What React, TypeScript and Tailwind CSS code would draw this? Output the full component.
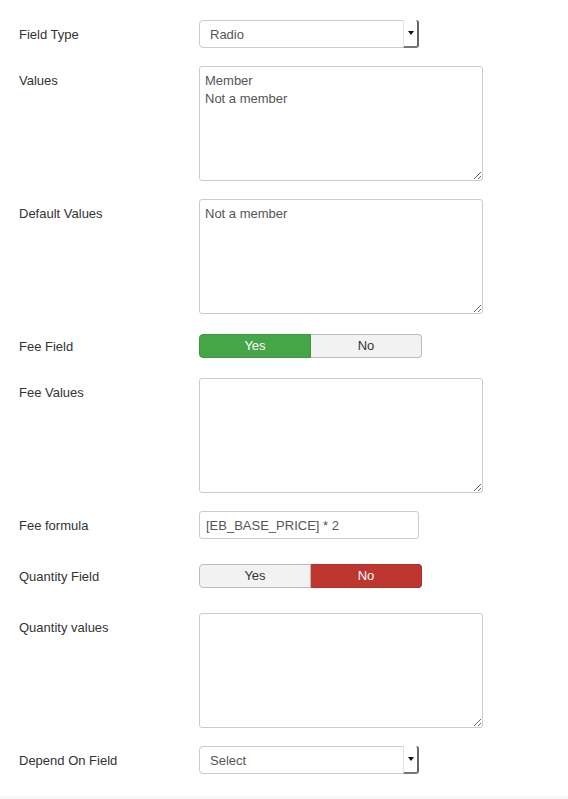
import React from "react";

const font = { fontFamily: '"Liberation Sans", Arial, sans-serif' };

function Label({ text, pt }: { text: string; pt: string }) {
  return (
    <div className={`w-[180px] shrink-0 text-[13px] leading-[18px] text-[#333] ${pt}`}>{text}</div>
  );
}

function Select({ value }: { value: string }) {
  return (
    <div className="relative w-[220px] h-[28px] border border-[#ccc] rounded-[4px] bg-white flex items-center pl-[10px] pt-[1px] text-[13px] text-[#555]">
      {value}
      <div className="absolute right-[-1px] top-[-1px] bottom-[-1px] w-[16px] bg-white border-l border-[#e2e2e2] border-r-2 border-b-2 border-r-[#666] border-b-[#777] rounded-r-[3px] flex items-center justify-center">
        <div className="w-0 h-0 border-l-[3px] border-r-[3px] border-t-[4px] border-l-transparent border-r-transparent border-t-[#111]" />
      </div>
    </div>
  );
}

function Area({ value }: { value: string }) {
  return (
    <textarea
      readOnly
      defaultValue={value}
      className="block w-[284px] h-[115px] border border-[#ccc] rounded-[3px] bg-white px-[5px] pt-[5px] pb-[3px] text-[13px] leading-[18px] text-[#555] outline-none"
      style={font}
    />
  );
}

function Toggle({ yes }: { yes: boolean }) {
  return (
    <div className="flex w-[223px] h-[24px] text-[13px]">
      <div
        className={
          yes
            ? "flex-1 flex items-center justify-center rounded-l-[4px] bg-[#46a546] border border-[#3f953f] text-white"
            : "flex-1 flex items-center justify-center rounded-l-[4px] bg-[#f2f2f2] border border-[#bbb] text-[#333]"
        }
      >
        Yes
      </div>
      <div
        className={
          yes
            ? "flex-1 flex items-center justify-center rounded-r-[4px] bg-[#f2f2f2] border border-l-0 border-[#bbb] text-[#333]"
            : "flex-1 flex items-center justify-center rounded-r-[4px] bg-[#bd362f] border border-l-0 border-[#a9302a] text-white"
        }
      >
        No
      </div>
    </div>
  );
}

export default function App() {
  return (
    <div className="w-[568px] h-[799px] bg-white flex flex-col" style={font}>
      <div className="flex-1 pl-[19px] pt-[20px]">
        <div className="flex">
          <Label text="Field Type" pt="pt-[6px]" />
          <Select value="Radio" />
        </div>
        <div className="flex mt-[18px]">
          <Label text="Values" pt="pt-[6px]" />
          <Area value={"Member\nNot a member"} />
        </div>
        <div className="flex mt-[18px]">
          <Label text="Default Values" pt="pt-[6px]" />
          <Area value="Not a member" />
        </div>
        <div className="flex mt-[20px]">
          <Label text="Fee Field" pt="pt-[4px]" />
          <Toggle yes={true} />
        </div>
        <div className="flex mt-[20px]">
          <Label text="Fee Values" pt="pt-[6px]" />
          <Area value="" />
        </div>
        <div className="flex mt-[18px]">
          <Label text="Fee formula" pt="pt-[6px]" />
          <div className="w-[220px] h-[28px] border border-[#ccc] rounded-[3px] bg-white flex items-center pl-[6px] pt-[1px] text-[13px] text-[#555]">
            [EB_BASE_PRICE] * 2
          </div>
        </div>
        <div className="flex mt-[25px]">
          <Label text="Quantity Field" pt="pt-[4px]" />
          <Toggle yes={false} />
        </div>
        <div className="flex mt-[25px]">
          <Label text="Quantity values" pt="pt-[6px]" />
          <Area value="" />
        </div>
        <div className="flex mt-[18px]">
          <Label text="Depend On Field" pt="pt-[6px]" />
          <Select value="Select" />
        </div>
      </div>
      <div className="h-[3px] bg-[#f8f8f8]" />
    </div>
  );
}
